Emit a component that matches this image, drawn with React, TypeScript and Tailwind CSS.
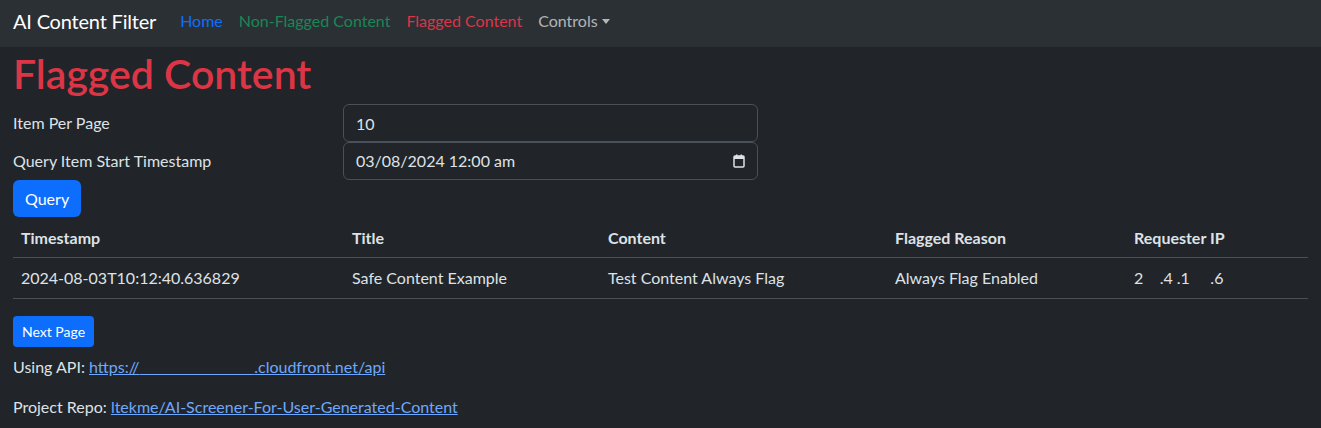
const font = { fontFamily: 'Lato, "Noto Sans", sans-serif' };

function CalendarGlyph() {
  return (
    <svg width="12" height="14" viewBox="0 0 12 14" fill="none">
      <rect x="1" y="2" width="10" height="11" rx="1" stroke="#dee2e6" strokeWidth="1.5" />
      <rect x="1" y="2" width="10" height="3" fill="#dee2e6" />
      <rect x="3" y="0.5" width="1.5" height="2.5" fill="#dee2e6" />
      <rect x="7.5" y="0.5" width="1.5" height="2.5" fill="#dee2e6" />
    </svg>
  );
}

export default function App() {
  const rows = [
    {
      ts: '2024-08-03T10:12:40.636829',
      title: 'Safe Content Example',
      content: 'Test Content Always Flag',
      reason: 'Always Flag Enabled',
      ip: '2\u00a0\u00a0\u00a0\u00a0.4 .1\u00a0\u00a0\u00a0\u00a0\u00a0.6',
    },
  ];

  return (
    <div className="min-h-screen bg-[#212529] text-[#dee2e6] text-[16px]" style={font}>
      <nav className="h-[47px] bg-[#2b3035] flex items-center px-[13px] pb-[6px]">
        <span className="text-[20px] tracking-[-0.2px] text-white mr-[16px]">AI Content Filter</span>
        <div className="flex items-center">
          <a className="px-2 text-[#0d6efd]">Home</a>
          <a className="px-2 text-[#198754]">Non-Flagged Content</a>
          <a className="px-2 text-[#dc3545]">Flagged Content</a>
          <a className="px-2 text-[#ffffffa6] flex items-center gap-[4px]">
            Controls
            <span className="w-0 h-0 border-l-[4px] border-r-[4px] border-t-[5px] border-l-transparent border-r-transparent border-t-[#ffffffa6] mt-[1px]" />
          </a>
        </div>
      </nav>

      <main className="px-[13px]">
        <h1 className="text-[41px] leading-[48px] font-semibold text-[#dc3545] mt-[3px] mb-[6px]">Flagged Content</h1>

        <div className="flex items-center h-[38px]">
          <label className="w-[330px]">Item Per Page</label>
          <input
            readOnly
            value="10"
            className="w-[415px] h-[38px] rounded-[6px] border border-[#495057] bg-[#212529] px-3 text-[#dee2e6] outline-none"
            style={font}
          />
        </div>
        <div className="flex items-center h-[38px]">
          <label className="w-[330px]">Query Item Start Timestamp</label>
          <div className="w-[415px] h-[38px] rounded-[6px] border border-[#495057] bg-[#212529] px-3 flex items-center justify-between">
            <span>03/08/2024 12:00 am</span>
            <CalendarGlyph />
          </div>
        </div>

        <button className="h-[37px] px-3 rounded-[6px] bg-[#0d6efd] text-white">Query</button>

        <table className="w-full mt-[1px] border-collapse text-left">
          <thead>
            <tr className="border-b border-[#495057] h-[39px]">
              <th className="w-[331px] px-2 pt-[1px] font-bold">Timestamp</th>
              <th className="w-[256px] px-2 pt-[1px] font-bold">Title</th>
              <th className="w-[287px] px-2 pt-[1px] font-bold">Content</th>
              <th className="w-[239px] px-2 pt-[1px] font-bold">Flagged Reason</th>
              <th className="px-2 pt-[1px] font-bold">Requester IP</th>
            </tr>
          </thead>
          <tbody>
            {rows.map((r) => (
              <tr key={r.ts} className="border-b border-[#495057] h-[41px]">
                <td className="px-2">{r.ts}</td>
                <td className="px-2">{r.title}</td>
                <td className="px-2">{r.content}</td>
                <td className="px-2">{r.reason}</td>
                <td className="px-2">{r.ip}</td>
              </tr>
            ))}
          </tbody>
        </table>

        <button className="mt-[17px] h-[31px] px-[9px] rounded-[4px] bg-[#0d6efd] text-white text-[14px]">Next Page</button>

        <p className="mt-[8px] leading-[24px]">
          Using API:{' '}
          <a className="text-[#6ea8fe] underline">
            https://{'\u00a0'.repeat(28)}.cloudfront.net/api
          </a>
        </p>
        <p className="mt-4 leading-[24px]">
          Project Repo: <a className="text-[#6ea8fe] underline">ltekme/AI-Screener-For-User-Generated-Content</a>
        </p>
      </main>
    </div>
  );
}
